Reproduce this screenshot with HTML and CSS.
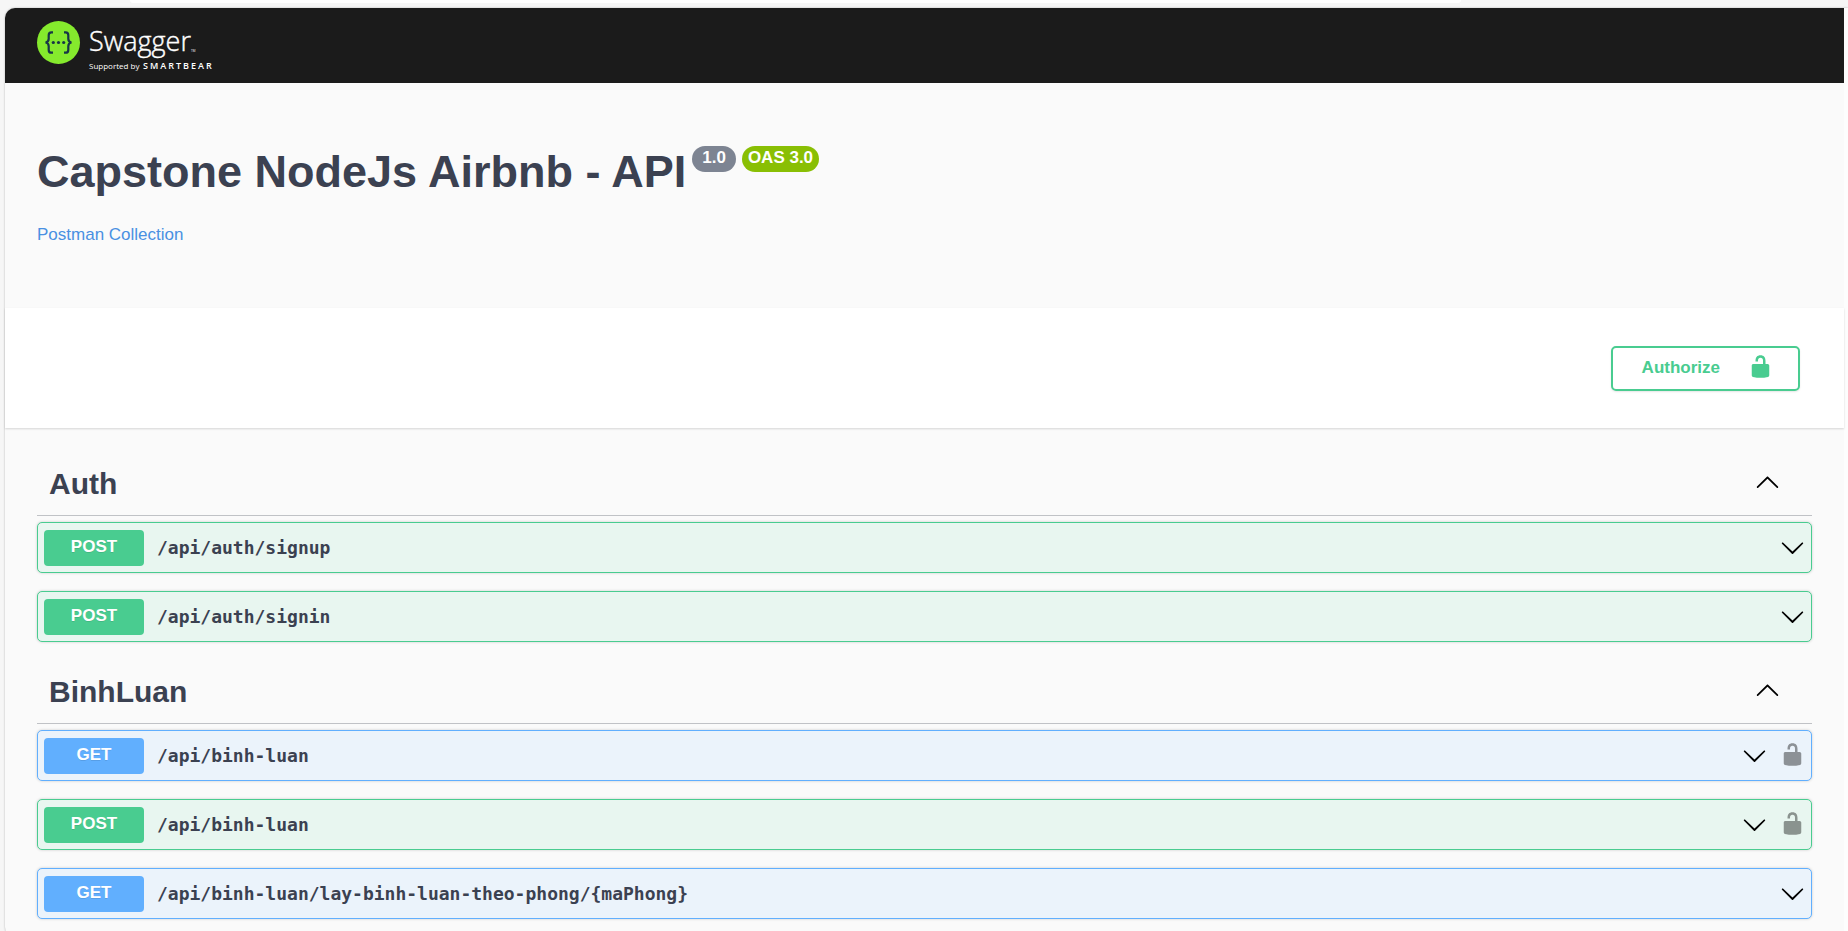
FILE: index.html
```html
<!DOCTYPE html>
<html lang="en">
<head>
<meta charset="utf-8">
<title>Swagger UI</title>
<link rel="stylesheet" href="styles.css">
</head>
<body>
<svg class="sprite" aria-hidden="true">
  <symbol id="down" viewBox="0 0 20 20"><path d="M17.418 6.109c.272-.268.709-.268.979 0s.271.701 0 .969l-7.908 7.83c-.27.268-.707.268-.979 0l-7.908-7.83c-.27-.268-.27-.701 0-.969s.709-.268.979 0L10 13.25l7.418-7.141z"/></symbol>
  <symbol id="up" viewBox="0 0 20 20"><path d="M17.418 14.908c.272.268.709.268.979 0s.271-.701 0-.969l-7.908-7.83c-.27-.268-.707-.268-.979 0l-7.908 7.83c-.27.268-.27.701 0 .969s.709.268.979 0L10 7.767l7.418 7.141z"/></symbol>
  <symbol id="unlocked" viewBox="0 0 20 20"><path d="M15.8 8H14V5.6C14 2.703 12.665 1 10 1 7.334 1 6 2.703 6 5.6V6h2v-.801C8 3.754 8.797 3 10 3c1.203 0 2 .754 2 2.199V8H4c-.553 0-1 .646-1 1.199V17c0 .549.428 1.139.951 1.307l1.197.387C5.672 18.861 6.55 19 7.1 19h5.8c.549 0 1.428-.139 1.951-.307l1.196-.387c.524-.167.953-.757.953-1.306V9.199C17 8.646 16.352 8 15.8 8z"/></symbol>
</svg>
<div class="window">
  <div class="address"></div>
  <div class="page">
    <header class="topbar">
      <a class="brand" href="#" aria-label="Swagger, supported by SmartBear">
        <svg width="180" height="49" viewBox="0 0 180 49">
          <circle cx="21.5" cy="21.5" r="21.5" fill="#85ea2d"/>
          <g fill="none" stroke="#173647" stroke-width="2.2">
            <path d="M16 11.4h-1.6c-2 0-2.7 1-2.7 2.8v3.6c0 2.3-.8 3.4-3.2 3.7 2.4.3 3.2 1.4 3.2 3.7v3.7c0 1.8.7 2.8 2.7 2.8H16"/>
            <path d="M27 11.4h1.6c2 0 2.7 1 2.7 2.8v3.6c0 2.3.8 3.4 3.2 3.7-2.4.3-3.2 1.4-3.2 3.7v3.7c0 1.8-.7 2.8-2.7 2.8H27"/>
          </g>
          <g fill="#173647"><circle cx="16.3" cy="21.5" r="1.6"/><circle cx="21.5" cy="21.5" r="1.6"/><circle cx="26.7" cy="21.5" r="1.6"/></g>
          <text class="logo-name" x="52" y="30">Swagger</text>
          <text class="logo-tm" x="154" y="31">TM</text>
          <text class="logo-by" x="52" y="48">Supported by</text>
          <text class="logo-company" x="106" y="48">SMARTBEAR</text>
        </svg>
      </a>
    </header>
    <section class="info">
      <div class="title-row">
        <h1 class="title">Capstone NodeJs Airbnb - API</h1>
        <span class="badge version">1.0</span>
        <span class="badge oas">OAS 3.0</span>
      </div>
      <a class="link" href="#">Postman Collection</a>
    </section>
    <section class="schemes">
      <button class="authorize" type="button"><span class="authorize-label">Authorize</span><svg class="icon raised"><use href="#unlocked"/></svg></button>
    </section>
    <main class="operations">
      <section class="tag">
        <h2 class="tag-head"><button class="tag-toggle" type="button" aria-expanded="true">Auth <svg class="icon raised"><use href="#up"/></svg></button></h2>
        <div class="row post"><button class="summary" type="button"><span class="method">POST</span><span class="path">/api/auth/signup</span><svg class="icon"><use href="#down"/></svg></button></div>
        <div class="row post"><button class="summary" type="button"><span class="method">POST</span><span class="path">/api/auth/signin</span><svg class="icon"><use href="#down"/></svg></button></div>
      </section>
      <section class="tag">
        <h2 class="tag-head"><button class="tag-toggle" type="button" aria-expanded="true">BinhLuan <svg class="icon raised"><use href="#up"/></svg></button></h2>
        <div class="row get"><button class="summary" type="button"><span class="method">GET</span><span class="path">/api/binh-luan</span><svg class="icon"><use href="#down"/></svg></button><button class="lock" type="button" aria-label="Authorization button unlocked"><svg class="icon raised"><use href="#unlocked"/></svg></button></div>
        <div class="row post"><button class="summary" type="button"><span class="method">POST</span><span class="path">/api/binh-luan</span><svg class="icon"><use href="#down"/></svg></button><button class="lock" type="button" aria-label="Authorization button unlocked"><svg class="icon raised"><use href="#unlocked"/></svg></button></div>
        <div class="row get"><button class="summary" type="button"><span class="method">GET</span><span class="path">/api/binh-luan/lay-binh-luan-theo-phong/{maPhong}</span><svg class="icon"><use href="#down"/></svg></button></div>
      </section>
    </main>
  </div>
</div>
</body>
</html>
```
FILE: styles.css
```css
* { box-sizing: border-box; }

body {
  margin: 0;
  font-family: "Liberation Sans", Arial, sans-serif;
  font-size: 17px;
  color: #3b4151;
  background: #f6f6f6;
}

button {
  font: inherit;
  color: inherit;
  background: none;
  border: 0;
  padding: 0;
  cursor: pointer;
}

.sprite { display: none; }

.icon {
  width: 25px;
  height: 25px;
  flex: none;
  display: block;
  fill: #000;
}

.raised { margin-bottom: 4px; }

.window {
  min-height: 100vh;
  display: flex;
  flex-direction: column;
  gap: 5px;
  padding-left: 5px;
}

.address {
  height: 3px;
  margin: 0 21% 0 125px;
  background: #fff;
  border-radius: 0 0 12px 12px;
}

.page {
  flex: 1;
  border-right: 4px solid #fdfdfd;
  border-radius: 10px 0 0 10px;
  background: #fafafa;
  box-shadow: 0 0 2px rgba(0, 0, 0, .3);
}

.topbar {
  height: 75px;
  display: flex;
  align-items: center;
  padding: 0 32px;
  background: #1b1b1b;
  border-top-left-radius: 10px;
}

.brand { display: block; }
.brand svg { display: block; overflow: visible; }
.brand text { fill: #fff; font-family: "Open Sans", sans-serif; }
.brand .logo-name { font-size: 27px; font-weight: 300; stroke: #fff; stroke-width: .4px; }
.brand .logo-tm { font-size: 3px; }
.brand .logo-by { font-size: 8px; }
.brand .logo-company { font-size: 9px; font-weight: 600; letter-spacing: 2px; }

.info { padding: 63px 32px; }

.title-row {
  display: flex;
  align-items: flex-start;
  gap: 6px;
  margin-bottom: 27px;
}

.title {
  margin: 0;
  font-size: 45px;
  line-height: 52px;
}

.badge {
  height: 26px;
  line-height: 24px;
  border-radius: 13px;
  color: #fff;
  font-weight: 700;
}

.version { padding: 0 10px; background: #7d8492; }
.oas { padding: 0 6px; background: #89bf04; }

.link {
  display: block;
  width: fit-content;
  line-height: 20px;
  color: #4990e2;
  text-decoration: none;
}

.schemes {
  display: flex;
  justify-content: flex-end;
  padding: 38px 44px 37px;
  background: #fff;
  box-shadow: 0 1px 2px rgba(0, 0, 0, .15);
}

.authorize {
  height: 45px;
  display: flex;
  align-items: center;
  gap: 28px;
  padding: 0 25px 0 29px;
  border: 2px solid #49cc90;
  border-radius: 5px;
  box-shadow: 0 1px 2px rgba(0, 0, 0, .1);
  color: #49cc90;
  font-weight: 700;
}

.authorize .icon { fill: #49cc90; }
.authorize-label { padding-bottom: 2px; }

.operations { padding: 24px 32px 0; }

.tag-head {
  margin: 0 0 6px;
  font-size: 30px;
  border-bottom: 1px solid rgba(59, 65, 81, .3);
}

.tag-toggle {
  width: 100%;
  height: 63px;
  display: flex;
  align-items: center;
  justify-content: space-between;
  padding: 0 32px 0 12px;
}

.row {
  display: flex;
  align-items: center;
  gap: 13px;
  margin-bottom: 18px;
  padding: 7px 6px 6px;
  border: 1px solid;
  border-radius: 5px;
  box-shadow: 0 0 3px rgba(0, 0, 0, .19);
}

.post { border-color: #49cc90; background: #e8f6f0; }
.get { border-color: #61affe; background: #ebf3fb; }
.post .method { background: #49cc90; }
.get .method { background: #61affe; }

.summary {
  flex: 1;
  min-width: 0;
  display: flex;
  align-items: center;
}

.summary .icon { margin-bottom: 2px; }

.method {
  width: 100px;
  height: 36px;
  line-height: 34px;
  border-radius: 4px;
  color: #fff;
  font-weight: 700;
  text-align: center;
  text-shadow: 0 1px 0 rgba(0, 0, 0, .1);
}

.path {
  flex: 1;
  padding: 0 0 2px 13px;
  text-align: left;
  font-family: "DejaVu Sans Mono", monospace;
  font-size: 18px;
  font-weight: 700;
}

.lock { opacity: .4; }
```
